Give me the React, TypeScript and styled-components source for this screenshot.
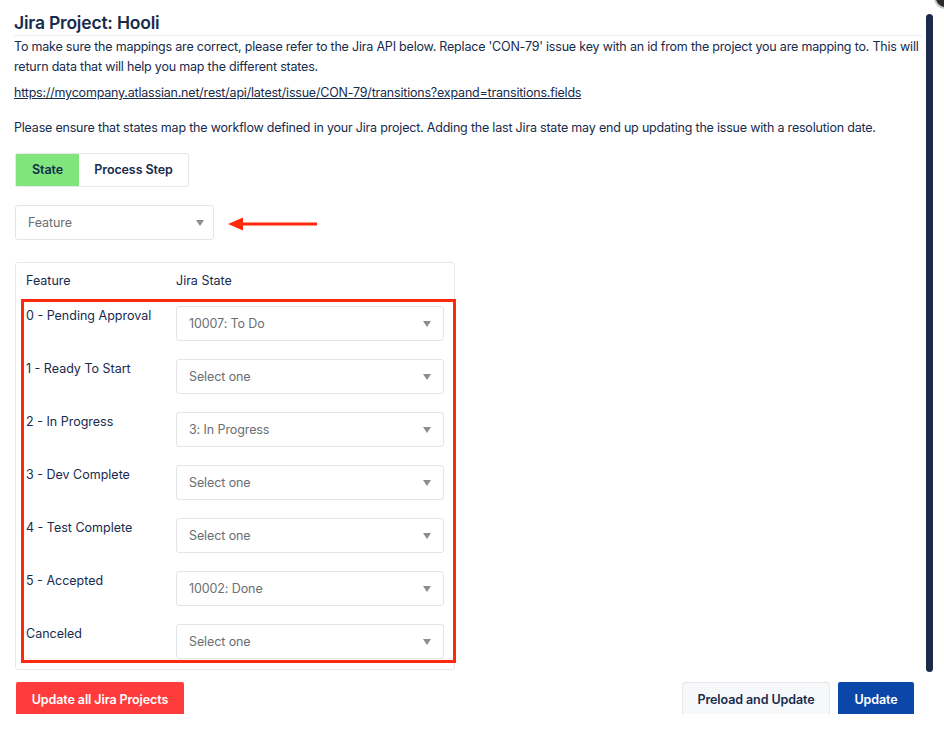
import React, { useState } from 'react';
import styled, { createGlobalStyle } from 'styled-components';

const GlobalStyle = createGlobalStyle`
  html, body {
    margin: 0;
    padding: 0;
    background: #ffffff;
  }
  body {
    font-family: Inter, "Noto Sans", "Liberation Sans", sans-serif;
    color: #172b4d;
  }
`;

type Mapping = {
  label: string;
  value: string;
};

const mappings: Mapping[] = [
  { label: '0 - Pending Approval', value: '10007: To Do' },
  { label: '1 - Ready To Start', value: 'Select one' },
  { label: '2 - In Progress', value: '3: In Progress' },
  { label: '3 - Dev Complete', value: 'Select one' },
  { label: '4 - Test Complete', value: 'Select one' },
  { label: '5 - Accepted', value: '10002: Done' },
  { label: 'Canceled', value: 'Select one' },
];

// the modal body is cut at 714px, so the footer buttons show only partly
const StyledPanel = styled.div`
  position: relative;
  height: 714px;
  overflow: hidden;
  padding: 0 22px 0 14px;
  display: flex;
  flex-direction: column;

  > * {
    flex-shrink: 0;
  }
`;

const StyledTitle = styled.h2`
  margin: 0;
  padding-top: 10px;
  height: 25px;
  font-size: 17.5px;
  font-weight: 600;
  line-height: 25px;
  letter-spacing: -0.2px;
  border-bottom: 1px solid #ebecf0;
`;

const StyledText = styled.p<{ $gap?: number }>`
  margin: 0;
  margin-top: ${props => props.$gap ?? 0}px;
  font-size: 12.5px;
  line-height: 20px;
  letter-spacing: -0.2px;
`;

const StyledLink = styled.a`
  color: #172b4d;
  text-decoration: underline;
`;

const StyledTabs = styled.div`
  margin-top: 15px;
  display: flex;
  align-self: flex-start;
  margin-left: 1px;
  border: 1px solid #e6e8eb;
  border-radius: 2px;
  overflow: hidden;
`;

const StyledTab = styled.button<{ $active?: boolean; $width: number }>`
  display: block;
  box-sizing: border-box;
  width: ${props => props.$width}px;
  height: 32px;
  padding: 0;
  margin: 0;
  border: none;
  white-space: nowrap;
  line-height: 32px;
  background: ${props => (props.$active ? '#80e57d' : '#ffffff')};
  color: #172b4d;
  font-family: inherit;
  font-size: 12.5px;
  font-weight: 600;
  letter-spacing: -0.1px;
  cursor: pointer;
`;

const StyledTypeRow = styled.div`
  margin-top: 18px;
  margin-left: 1px;
  display: flex;
  align-items: center;
`;

const StyledSelect = styled.div<{ $width?: number }>`
  width: ${props => (props.$width ? `${props.$width}px` : '100%')};
  height: 35px;
  box-sizing: border-box;
  border: 1px solid #e3e5e8;
  border-radius: 3px;
  background: #ffffff;
  display: flex;
  align-items: center;
  justify-content: space-between;
  padding: 0 ${props => (props.$width ? 9 : 12)}px 0 12px;
  color: #6b6e73;
  font-size: 12.5px;
  letter-spacing: -0.1px;
`;

const StyledCaret = styled.span`
  width: 0;
  height: 0;
  border-left: 4px solid transparent;
  border-right: 4px solid transparent;
  border-top: 6px solid #8a8d91;
`;

const StyledArrow = styled.svg`
  margin-left: 14px;
  margin-top: 2px;
`;

const StyledCard = styled.div`
  position: relative;
  margin-top: 22px;
  margin-left: 1px;
  width: 440px;
  box-sizing: border-box;
  border: 1px solid #e6e8eb;
  border-radius: 3px;
  padding: 9px 10px 10px;
`;

const StyledHeaderRow = styled.div`
  display: grid;
  grid-template-columns: 150px 1fr;
  font-size: 12.5px;
  line-height: 18px;
  margin-bottom: 16px;
`;

const StyledRows = styled.div`
  display: flex;
  flex-direction: column;
  gap: 18px;
`;

const StyledRow = styled.div`
  display: grid;
  grid-template-columns: 150px 1fr;
  align-items: start;
`;

const StyledLabel = styled.span`
  font-size: 12.5px;
  line-height: 18px;
  padding-top: 1px;
`;

const StyledHighlight = styled.div`
  position: absolute;
  left: 5px;
  top: 36px;
  width: 435px;
  height: 364px;
  box-sizing: border-box;
  border: 3px solid #ff2a0d;
  pointer-events: none;
`;

const StyledFooter = styled.div`
  margin-top: 12px;
  display: flex;
  align-items: flex-start;
  padding-right: 8px;
`;

const StyledButton = styled.button<{ $variant: 'danger' | 'default' | 'primary'; $width: number }>`
  width: ${props => props.$width}px;
  height: 36px;
  padding: 0 0 2px;
  border: 1px solid
    ${props => (props.$variant === 'default' ? '#e6e8eb' : 'transparent')};
  border-radius: 2px;
  font-family: inherit;
  font-size: 12.5px;
  font-weight: 600;
  letter-spacing: -0.1px;
  cursor: pointer;
  background: ${props =>
    props.$variant === 'danger' ? '#ff3b3b' : props.$variant === 'primary' ? '#0a47a8' : '#f7f8f9'};
  color: ${props => (props.$variant === 'default' ? '#172b4d' : '#ffffff')};
`;

const StyledSpacer = styled.div`
  flex: 1;
`;

const StyledButtonGroup = styled.div`
  display: flex;
  gap: 8px;
`;

const StyledScrollThumb = styled.div`
  position: absolute;
  right: 11px;
  top: 14px;
  width: 7px;
  height: 658px;
  border-radius: 4px;
  background: #1c2b4b;
`;

const StyledCloseDot = styled.div`
  position: absolute;
  right: -12px;
  top: -13px;
  width: 18px;
  height: 18px;
  border-radius: 50%;
  background: #2b2b2b;
  border: 2px solid #c9c9c9;
`;

function App() {
  const [tab, setTab] = useState<'state' | 'step'>('state');

  return (
    <>
      <GlobalStyle />
      <StyledPanel>
        <StyledTitle>Jira Project: Hooli</StyledTitle>
        <StyledText $gap={1}>
          To make sure the mappings are correct, please refer to the Jira API below. Replace 'CON-79' issue key with
          an id from the project you are mapping to. This will return data that will help you map the different
          states.
        </StyledText>
        <StyledText $gap={6}>
          <StyledLink href="#">
            https://mycompany.atlassian.net/rest/api/latest/issue/CON-79/transitions?expand=transitions.fields
          </StyledLink>
        </StyledText>
        <StyledText $gap={15}>
          Please ensure that states map the workflow defined in your Jira project. Adding the last Jira state may end up
          updating the issue with a resolution date.
        </StyledText>

        <StyledTabs>
          <StyledTab $active={tab === 'state'} $width={63} onClick={() => setTab('state')}>
            State
          </StyledTab>
          <StyledTab $active={tab === 'step'} $width={109} onClick={() => setTab('step')}>
            Process Step
          </StyledTab>
        </StyledTabs>

        <StyledTypeRow>
          <StyledSelect $width={199}>
            Feature
            <StyledCaret />
          </StyledSelect>
          <StyledArrow width="90" height="16" viewBox="0 0 90 16">
            <path d="M12 8 H89" stroke="#ff2a0d" strokeWidth="3" />
            <path d="M0 8 L15 1.5 L15 14.5 Z" fill="#ff2a0d" />
          </StyledArrow>
        </StyledTypeRow>

        <StyledCard>
          <StyledHeaderRow>
            <span>Feature</span>
            <span>Jira State</span>
          </StyledHeaderRow>
          <StyledRows>
            {mappings.map(mapping => (
              <StyledRow key={mapping.label}>
                <StyledLabel>{mapping.label}</StyledLabel>
                <StyledSelect>
                  {mapping.value}
                  <StyledCaret />
                </StyledSelect>
              </StyledRow>
            ))}
          </StyledRows>
          <StyledHighlight />
        </StyledCard>

        <StyledFooter>
          <StyledButton $variant="danger" $width={168} style={{ marginLeft: 2 }}>
            Update all Jira Projects
          </StyledButton>
          <StyledSpacer />
          <StyledButtonGroup>
            <StyledButton $variant="default" $width={148}>
              Preload and Update
            </StyledButton>
            <StyledButton $variant="primary" $width={76}>
              Update
            </StyledButton>
          </StyledButtonGroup>
        </StyledFooter>

        <StyledScrollThumb />
        <StyledCloseDot />
      </StyledPanel>
    </>
  );
}

export default App;
